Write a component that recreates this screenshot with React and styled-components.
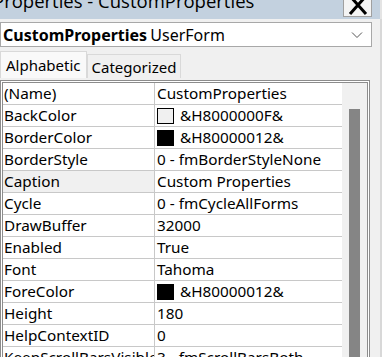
import React from "react";
import styled, { createGlobalStyle } from "styled-components";

const GlobalStyle = createGlobalStyle`
  html, body {
    margin: 0;
    padding: 0;
    background: #f0f0f0;
    overflow: hidden;
  }
  body {
    font-family: "Noto Sans", "Open Sans", sans-serif;
  }
`;

const rows = [
  { name: "(Name)", value: "CustomProperties" },
  { name: "BackColor", value: "&H8000000F&", swatch: "#f0f0f0" },
  { name: "BorderColor", value: "&H80000012&", swatch: "#000" },
  { name: "BorderStyle", value: "0 - fmBorderStyleNone" },
  { name: "Caption", value: "Custom Properties", selected: true },
  { name: "Cycle", value: "0 - fmCycleAllForms" },
  { name: "DrawBuffer", value: "32000" },
  { name: "Enabled", value: "True" },
  { name: "Font", value: "Tahoma" },
  { name: "ForeColor", value: "&H80000012&", swatch: "#000" },
  { name: "Height", value: "180" },
  { name: "HelpContextID", value: "0" },
  { name: "KeepScrollBarsVisible", value: "3 - fmScrollBarsBoth" },
];

export default function App() {
  return (
    <>
      <GlobalStyle />
      <Window>
        <TitleBar>
          <Title>Properties - CustomProperties</Title>
          <CloseButton>
            <svg width="20" height="16" viewBox="0 0 20 16">
              <path d="M2 -4 L18 14 M18 -4 L2 14" stroke="#000" strokeWidth="3" fill="none" />
            </svg>
          </CloseButton>
        </TitleBar>
        <Body>
          <Combo>
            <ComboText>
              <strong>CustomProperties</strong> UserForm
            </ComboText>
            <svg width="12" height="8" viewBox="0 0 12 8">
              <path d="M1 1.5 L6 6.5 L11 1.5" stroke="#555" strokeWidth="1" fill="none" />
            </svg>
          </Combo>
          <Tabs>
            <Tab active>Alphabetic</Tab>
            <Tab>Categorized</Tab>
          </Tabs>
          <GridPanel>
            <Grid>
              {rows.map(r => (
                <Row key={r.name}>
                  <NameCell selected={r.selected}>{r.name}</NameCell>
                  <ValueCell>
                    {r.swatch && <Swatch color={r.swatch} />}
                    {r.value}
                  </ValueCell>
                </Row>
              ))}
            </Grid>
            <ScrollTrack>
              <Thumb />
            </ScrollTrack>
          </GridPanel>
        </Body>
      </Window>
    </>
  );
}

const Window = styled.div`
  width: 382px;
  height: 357px;
  overflow: hidden;
  display: flex;
  flex-direction: column;
`;

const TitleBar = styled.div`
  height: 19px;
  background: #c3d1df;
  display: flex;
  justify-content: space-between;
  align-items: flex-end;
  border-right: 2px solid #e4e4e4;
  overflow: hidden;
`;

const Title = styled.div`
  font-family: "Open Sans", sans-serif;
  font-size: 18.5px;
  line-height: 18px;
  color: #000;
  margin-left: -7px;
  margin-bottom: 9px;
  white-space: nowrap;
`;

const CloseButton = styled.div`
  width: 29px;
  height: 17px;
  margin-right: 8px;
  margin-bottom: 2px;
  box-sizing: border-box;
  background: #f4f4f4;
  border: 1px solid #a0a0a0;
  border-top: none;
  display: flex;
  justify-content: center;
  align-items: flex-start;
`;

const Body = styled.div`
  flex: 1;
  display: flex;
  flex-direction: column;
  padding: 3px 0 0 0;
  border-right: 2px solid #d8d8d8;
  min-height: 0;
`;

const Combo = styled.div`
  width: 372px;
  height: 25px;
  box-sizing: border-box;
  background: #fff;
  border: 1px solid #a8a8a8;
  display: flex;
  align-items: center;
  justify-content: space-between;
  padding: 0 8px 0 2px;
`;

const ComboText = styled.div`
  font-size: 16px;
  color: #000;
  white-space: nowrap;
  word-spacing: -1px;
  strong {
    font-weight: 700;
  }
`;

const Tabs = styled.div`
  display: flex;
  align-items: flex-end;
  height: 30px;
  margin-top: 1px;
`;

const Tab = styled.div`
  box-sizing: border-box;
  height: ${p => (p.active ? "27px" : "24px")};
  padding: 0 ${p => (p.active ? "5px" : "4px")};
  background: ${p => (p.active ? "#f9f9f9" : "#f0f0f0")};
  border: 1px solid #d9d9d9;
  border-bottom: none;
  font-size: 15px;
  line-height: 24px;
  color: #000;
  display: flex;
  align-items: center;
`;

const GridPanel = styled.div`
  flex: 1;
  width: 370px;
  box-sizing: border-box;
  border: 3px double #8c8c8c;
  border-bottom: none;
  margin-top: 2px;
  display: flex;
  min-height: 0;
  background: #fff;
`;

const Grid = styled.div`
  width: 339px;
  display: flex;
  flex-direction: column;
`;

const Row = styled.div`
  display: grid;
  grid-template-columns: 152px 1fr;
  height: 22px;
  box-sizing: border-box;
  border-bottom: 1px solid #c8c8c8;
`;

const NameCell = styled.div`
  font-size: 15.3px;
  line-height: 21px;
  padding-left: 1px;
  color: #000;
  background: ${p => (p.selected ? "#f0f0f0" : "#fff")};
  border-right: 1px solid #c8c8c8;
  white-space: nowrap;
  overflow: hidden;
`;

const ValueCell = styled.div`
  font-size: 15.3px;
  line-height: 21px;
  padding-left: 2px;
  color: #000;
  display: flex;
  align-items: center;
  white-space: nowrap;
  overflow: hidden;
`;

const Swatch = styled.span`
  width: 17px;
  height: 16px;
  box-sizing: border-box;
  background: ${p => p.color};
  border: 1px solid #000;
  margin-right: 6px;
  flex-shrink: 0;
`;

const ScrollTrack = styled.div`
  flex: 1;
  background: #f0f0f0;
  padding-top: 26px;
  display: flex;
  justify-content: center;
`;

const Thumb = styled.div`
  width: 11px;
  height: 400px;
  background: #858585;
`;
